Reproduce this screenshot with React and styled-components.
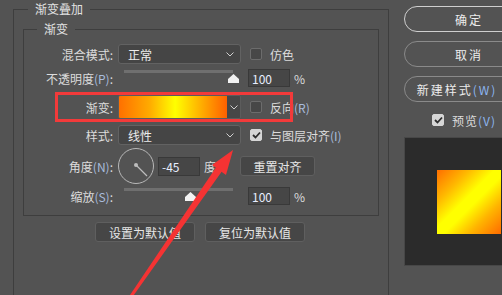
import React from 'react';
import styled, { createGlobalStyle } from 'styled-components';

const GlobalStyle = createGlobalStyle`
  html, body { margin: 0; padding: 0; background: #535353; }
`;

const Root = styled.div`
  position: relative;
  width: 502px;
  height: 295px;
  overflow: hidden;
  background: #535353;
  display: flex;
  align-items: flex-start;
  font-family: "Noto Sans CJK SC", "Liberation Sans", sans-serif;
  font-size: 12px;
  color: #dcdcdc;
`;

const OuterGroup = styled.fieldset`
  flex-shrink: 0;
  box-sizing: border-box;
  width: 376px;
  height: 330px;
  margin: 2px 0 0 13px;
  padding: 0;
  border: 1px solid #3e3e3e;
  min-width: 0;
`;

const Legend = styled.legend`
  margin-left: ${p => p.$indent}px;
  padding: 0 7px;
  font-size: 12px;
  line-height: 14px;
  color: #e2e2e2;
`;

const InnerGroup = styled.fieldset`
  box-sizing: border-box;
  width: 356px;
  margin: 6px 0 0 9px;
  padding: 6px 0 8px 0;
  border: 1px solid #3e3e3e;
  min-width: 0;
`;

const Row = styled.div`
  position: relative;
  display: flex;
  align-items: center;
  height: ${p => p.$h}px;
  margin-top: ${p => p.$mt || 0}px;
`;

const Label = styled.div`
  box-sizing: border-box;
  width: 89px;
  text-align: right;
  white-space: nowrap;
  margin-right: 5px;
`;

const Mn = styled.span`
  color: ${p => p.$strong ? '#8cb6f2' : '#a9bcdc'};
`;

const SelectBox = styled.div`
  box-sizing: border-box;
  width: 123px;
  height: 20px;
  display: flex;
  align-items: center;
  justify-content: space-between;
  padding: 0 6px 0 9px;
  background: #454545;
  border: 1px solid #626262;
  border-radius: 3px;
  color: #ececec;
`;

const GradientPicker = styled.div`
  box-sizing: border-box;
  width: 123px;
  height: 24px;
  display: flex;
  border: 1px solid #5c5c5c;
  border-radius: 2px;
  overflow: hidden;
`;

const GradientStrip = styled.div`
  flex: 1;
  background: linear-gradient(to right, #ff7000 0%, #ffaa00 28%, #ffff00 52%, #ffa800 78%, #ff6000 100%);
`;

const GradientDrop = styled.div`
  width: 13px;
  display: flex;
  align-items: center;
  justify-content: center;
  background: #474747;
`;

const CheckWrap = styled.div`
  display: flex;
  align-items: center;
  margin-left: ${p => p.$ml}px;
  white-space: nowrap;
`;

const Box = styled.div`
  box-sizing: border-box;
  width: 12px;
  height: 12px;
  margin-right: 8px;
  border-radius: 2px;
  display: flex;
  align-items: center;
  justify-content: center;
  background: ${p => p.$checked ? '#d6d6d6' : '#474747'};
  border: 1px solid ${p => p.$checked ? '#d6d6d6' : '#6c6c6c'};
`;

const Slider = styled.div`
  position: relative;
  box-sizing: border-box;
  width: 123px;
  height: 20px;
  padding: 0 8px 0 6px;
`;

const Track = styled.div`
  margin-top: 2px;
  height: 3px;
  background: #6f6f6f;
`;

const Thumb = styled.div`
  position: absolute;
  top: 6px;
  width: 11px;
  height: 9px;
  background: #f2f2f2;
  clip-path: polygon(50% 0, 100% 55%, 100% 100%, 0 100%, 0 55%);
`;

const NumInput = styled.div`
  box-sizing: border-box;
  width: 42px;
  height: ${p => p.$h || 18}px;
  margin-left: ${p => p.$ml}px;
  padding-left: 3px;
  display: flex;
  align-items: center;
  background: #464646;
  border: 1px solid #393939;
  color: #e8eeff;
`;

const Unit = styled.span`
  margin-left: 4px;
  color: #dcdcdc;
`;

const Dial = styled.div`
  position: relative;
  box-sizing: border-box;
  width: 36px;
  height: 36px;
  margin-right: 4px;
  border: 1px solid #b8b8b8;
  border-radius: 50%;
`;

const Btn = styled.div`
  box-sizing: border-box;
  width: ${p => p.$w}px;
  height: 20px;
  margin-left: ${p => p.$ml || 0}px;
  display: flex;
  align-items: center;
  justify-content: center;
  background: #464646;
  border: 1px solid #5f5f5f;
  border-radius: 3px;
  color: #e6e6e6;
  white-space: nowrap;
`;

const FooterRow = styled.div`
  display: flex;
  gap: 10px;
  margin: 6px 0 0 81px;
`;

const Highlight = styled.div`
  position: absolute;
  left: 31px;
  top: 0;
  width: 238px;
  height: 30px;
  box-sizing: border-box;
  border: 3px solid #f23a3a;
  pointer-events: none;
`;

const Side = styled.div`
  flex-shrink: 0;
  display: flex;
  flex-direction: column;
  margin: 6px 0 0 15px;
`;

const SideButton = styled.div`
  box-sizing: border-box;
  width: 130px;
  height: 26px;
  margin-bottom: 9px;
  padding-right: ${p => p.$pr || 0}px;
  display: flex;
  align-items: center;
  justify-content: center;
  border: 1px solid ${p => p.$primary ? '#cfcfcf' : '#8a8a8a'};
  border-radius: 13px;
  color: #ececec;
  font-size: 12px;
  letter-spacing: 2px;
  white-space: nowrap;
`;

const PreviewRow = styled.div`
  display: flex;
  align-items: center;
  height: 16px;
  margin: 1px 0 0 28px;
  font-size: 12px;
  letter-spacing: 1px;
`;

const PreviewBox = styled.div`
  box-sizing: border-box;
  width: 130px;
  height: 129px;
  margin-top: 9px;
  padding: 32px;
  background: #2b2b2b;
  border: 1px solid #474747;
`;

const Swatch = styled.div`
  width: 64px;
  height: 64px;
  background: linear-gradient(135deg, #ff6e00 0%, #ffb800 25%, #ffff00 45%, #ffff00 55%, #ffb400 75%, #ff6a00 100%);
`;

const Overlay = styled.svg`
  position: absolute;
  left: 0;
  top: 0;
  pointer-events: none;
`;

const Chevron = () => (
  <svg width="8" height="5" viewBox="0 0 8 5">
    <path d="M0.5 0.5 L4 4 L7.5 0.5" fill="none" stroke="#cfcfcf" strokeWidth="1" />
  </svg>
);

const Tick = () => (
  <svg width="9" height="8" viewBox="0 0 9 8">
    <path d="M1 4 L3.5 6.5 L8 1.5" fill="none" stroke="#2e2e2e" strokeWidth="1.8" />
  </svg>
);

const Check = ({ checked, ml = 9, children }) => (
  <CheckWrap $ml={ml}>
    <Box $checked={checked}>{checked && <Tick />}</Box>
    {children}
  </CheckWrap>
);

export default function App() {
  return (
    <>
      <GlobalStyle />
      <Root>
        <OuterGroup>
          <Legend $indent={14}>渐变叠加</Legend>
          <InnerGroup>
            <Legend $indent={13}>渐变</Legend>

            <Row $h={24}>
              <Label>混合模式:</Label>
              <SelectBox>正常<Chevron /></SelectBox>
              <Check>仿色</Check>
            </Row>

            <Row $h={24}>
              <Label>不透明度<Mn>(P)</Mn>:</Label>
              <Slider>
                <Track />
                <Thumb style={{ left: 110 }} />
              </Slider>
              <NumInput $ml={7}>100</NumInput>
              <Unit>%</Unit>
            </Row>

            <Row $h={30} $mt={2}>
              <Label>渐变:</Label>
              <GradientPicker>
                <GradientStrip />
                <GradientDrop><Chevron /></GradientDrop>
              </GradientPicker>
              <Check>反向<Mn>(R)</Mn></Check>
              <Highlight />
            </Row>

            <Row $h={24} $mt={1}>
              <Label>样式:</Label>
              <SelectBox>线性<Chevron /></SelectBox>
              <Check checked>与图层对齐<Mn>(I)</Mn></Check>
            </Row>

            <Row $h={38}>
              <Label>角度<Mn>(N)</Mn>:</Label>
              <Dial>
                <svg width="34" height="34" viewBox="0 0 34 34">
                  <circle cx="17" cy="16" r="2" fill="#bdbdbd" />
                  <line x1="17" y1="16" x2="28" y2="27" stroke="#bdbdbd" strokeWidth="1.2" />
                </svg>
              </Dial>
              <NumInput $ml={0} $h={19}>-45</NumInput>
              <Unit>度</Unit>
              <Btn $w={75} $ml={24}>重置对齐</Btn>
            </Row>

            <Row $h={22}>
              <Label>缩放<Mn>(S)</Mn>:</Label>
              <Slider>
                <Track />
                <Thumb style={{ left: 67 }} />
              </Slider>
              <NumInput $ml={7}>100</NumInput>
              <Unit>%</Unit>
            </Row>
          </InnerGroup>

          <FooterRow>
            <Btn $w={100}>设置为默认值</Btn>
            <Btn $w={100}>复位为默认值</Btn>
          </FooterRow>
        </OuterGroup>

        <Side>
          <SideButton $primary>确定</SideButton>
          <SideButton>取消</SideButton>
          <SideButton $pr={24}>新建样式<Mn $strong>(W)</Mn></SideButton>
          <PreviewRow>
            <Check checked ml={0}>预览<Mn $strong>(V)</Mn></Check>
          </PreviewRow>
          <PreviewBox>
            <Swatch />
          </PreviewBox>
        </Side>

        <Overlay width="502" height="295" viewBox="0 0 502 295">
          <polygon points="128,298 131,299 225,167 219,163" fill="#f53333" />
          <polygon points="233,150 226,175 212,165" fill="#f53333" />
        </Overlay>
      </Root>
    </>
  );
}
